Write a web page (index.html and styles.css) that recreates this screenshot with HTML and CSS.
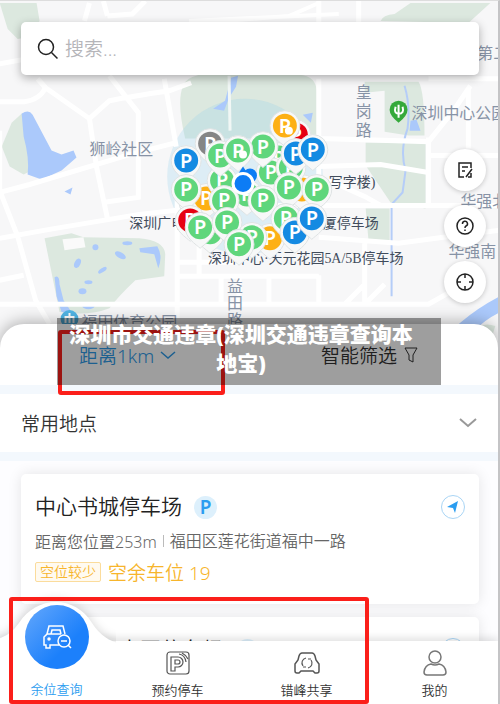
FILE: index.html
```
<!DOCTYPE html>
<html lang="zh">
<head>
    <meta charset="UTF-8">
    <meta name="viewport" content="width=device-width, initial-scale=1.0">
    <title>停车查询</title>
    <link rel="stylesheet" href="styles.css">
</head>
<body>
    <div class="app">
        <section class="map">
            <svg class="map-canvas" viewBox="0 0 500 354" preserveAspectRatio="xMidYMid slice">
                <defs>
                    <g id="pin">
                        <path d="M0 21C-4 17-15 11-15 0A15 15 0 0 1 15 0C15 11 4 17 0 21Z" fill="#f7f8f8" stroke="#dfe3e4"/>
                        <circle r="12" fill="currentColor"/>
                        <text class="pin-text" y="7">P</text>
                    </g>
                </defs>
                <rect width="500" height="354" fill="#f7f7f8"/>
                <!-- 公园 -->
                <g fill="#dce8df">
                    <path d="M0 2H37L40 20L30 36L18 38L8 28Z"/>
                    <path d="M184 85Q185 78 200 74H300Q318 75 318 92V138H186Q177 100 184 85Z"/>
                    <path d="M382 20Q384 14 396 13L412 2H492L470 22Z"/>
                    <path d="M366 81H420Q426 90 426 135H410L386 131V90L366 92Z"/>
                    <path d="M367 142H427V208L392 202L367 165Z"/>
                    <path d="M367 208H391V240L370 242Z"/>
                    <path d="M12 122L23 112L32 170L24 174L10 166L2 146Z"/>
                    <path d="M45 238L72 233L84 237L140 238Q165 240 166 254L165 276L136 280Q120 295 110 308Q90 316 60 312Z"/>
                    <path d="M470 336Q482 320 497 326L492 342Z"/>
                </g>
                <path d="M63 239L84 237L86 247L65 250Z" fill="#fafafa"/>
                <circle cx="246" cy="176" r="78" fill="#8ed0ea" fill-opacity=".25"/>
                <!-- 水域 -->
                <g fill="#abc9fb">
                    <path d="M22 113Q29 108 33 114L52 150L62 154L74 150L77 157L62 170L42 179L28 174Q30 158 24 136Z"/>
                    <path d="M214 108L226 100L232 77L239 75L237 86L230 97L225 110Z"/>
                    <path d="M304 114L314 112L312 122Z"/>
                    <path d="M432 354Q460 318 500 297V313Q474 326 460 354Z"/>
                    <path d="M412 120L418 119L422 130H411Z"/>
                    <ellipse cx="78" cy="263" rx="3" ry="5" transform="rotate(25 78 263)"/>
                    <ellipse cx="96" cy="247" rx="3" ry="3"/>
                    <ellipse cx="121" cy="255" rx="6" ry="3" transform="rotate(30 121 255)"/>
                    <ellipse cx="128" cy="243" rx="5" ry="2"/>
                    <ellipse cx="103" cy="270" rx="5" ry="2" transform="rotate(-35 103 270)"/>
                    <ellipse cx="89" cy="282" rx="4" ry="2"/>
                    <ellipse cx="83" cy="291" rx="4" ry="3"/>
                    <ellipse cx="89" cy="306" rx="6" ry="3"/>
                    <path d="M140 248L158 246Q164 256 159 268L155 254L141 252Z"/>
                    <path d="M55 277Q60 274 60 284L64 300L72 312H62L57 296Z"/>
                    <path d="M65 191L73 187L71 194Z"/>
                </g>
                <path d="M406 85Q412 105 409 128Q401 150 407 170L404 192L393 204V296" fill="none" stroke="#b5cdf8" stroke-width="2"/>
                <!-- 道路 -->
                <g fill="none" stroke="#fff" stroke-width="5">
                    <path d="M0 63L60 52M0 101H25Q40 99 46 87L38 78M46 87L90 118L110 100Q130 96 170 90L192 82M90 118L97 166L108 218M110 75L139 112V197L103 202M165 78L177 146M0 192L30 184L130 154L177 142M0 130L0 190L18 236L36 300L50 324M0 238L50 229L140 214L220 205H500M85 20L90 2M108 15L133 13L146 0M108 15L104 0"/>
                    <path d="M320 78V205M360 0V22M320 0V22M320 138L430 141L455 110L472 85M430 137V205M470 87V148M430 78H500M320 166L382 164L430 172M430 155H500M320 237L400 243L460 235L500 230M0 304H430L455 290M178 180V320M177 262H240M177 276H320M222 275V305M240 275V305M270 275V305M320 275V305M366 240V304M366 304L386 284M346 304L366 284M200 240V276M0 280L24 275M330 180L366 196L382 205"/>
                    <path d="M200 22L290 15L320 2M190 20L340 13" stroke-width="4"/>
                </g>
                <path d="M230 75L231 130" stroke="#f1f7f5" stroke-width="3"/>
                <!-- 地名 -->
                <g class="place">
                    <text x="90" y="154">狮岭社区</text>
                    <text x="479" y="58">第二</text>
                    <text x="413" y="118">深圳中心公园</text>
                    <text x="357" y="97">皇</text>
                    <text x="357" y="116">岗</text>
                    <text x="357" y="135">路</text>
                    <text x="462" y="207">华强北</text>
                    <text x="450" y="257">华强南</text>
                    <text x="228" y="292">益</text>
                    <text x="228" y="309">田</text>
                    <text x="228" y="326">路</text>
                    <text x="82" y="328">福田体育公园</text>
                </g>
                <g class="place parking">
                    <text x="130" y="228">深圳广电</text>
                    <text x="330" y="187">写字楼)</text>
                    <text x="324" y="228">厦停车场</text>
                    <text x="209" y="263">深圳中心·天元花园5A/5B停车场</text>
                </g>
                <path d="M400 122Q391 115 391 109A9 9 0 0 1 409 109Q409 115 400 122Z" fill="#35a93b"/>
                <path d="M400 104V117M397 106Q395 113 400 113M404 106Q406 113 400 113" fill="none" stroke="#fff" stroke-width="2"/>
                <circle cx="70" cy="319" r="9" fill="#50b5e5"/>
                <path d="M65 317H75M70 313V323M66 323V318M74 323V318" fill="none" stroke="#fff" stroke-width="2"/>
                <!-- 停车场标记 -->
                <use href="#pin" class="gray" x="211" y="143"/>
                <use href="#pin" class="red" x="297" y="134"/>
                <use href="#pin" class="orange" x="195" y="202"/>
                <use href="#pin" class="orange" x="207" y="198"/>
                <use href="#pin" class="orange" x="303" y="189"/>
                <use href="#pin" class="green" x="223" y="180"/>
                <use href="#pin" class="green" x="280" y="157"/>
                <use href="#pin" class="green" x="272" y="172"/>
                <use href="#pin" class="green" x="292" y="167"/>
                <use href="#pin" class="green" x="248" y="194"/>
                <use href="#pin" class="green" x="221" y="155"/>
                <use href="#pin" class="green" x="264" y="146"/>
                <use href="#pin" class="green" x="239" y="150"/>
                <use href="#pin" class="orange" x="286" y="125"/>
                <use href="#pin" class="blue" x="187" y="160"/>
                <use href="#pin" class="blue" x="297" y="153"/>
                <use href="#pin" class="blue" x="314" y="149"/>
                <use href="#pin" class="green" x="187" y="189"/>
                <use href="#pin" class="green" x="290" y="187"/>
                <use href="#pin" class="green" x="318" y="189"/>
                <use href="#pin" class="green" x="225" y="200"/>
                <use href="#pin" class="green" x="264" y="200"/>
                <use href="#pin" class="red" x="191" y="220"/>
                <use href="#pin" class="green" x="211" y="232"/>
                <use href="#pin" class="green" x="201" y="227"/>
                <use href="#pin" class="green" x="228" y="222"/>
                <use href="#pin" class="orange" x="271" y="238"/>
                <use href="#pin" class="green" x="253" y="237"/>
                <use href="#pin" class="green" x="240" y="244"/>
                <use href="#pin" class="green" x="287" y="218"/>
                <use href="#pin" class="blue" x="296" y="232"/>
                <use href="#pin" class="blue" x="313" y="218"/>
                <circle cx="290" cy="130" r="4" fill="#fff"/>
                <circle cx="244" cy="154" r="4" fill="#fff"/>
                <circle cx="251" cy="175" r="7" fill="#0c7cf5"/>
                <path d="M244 166L250 175H238Z" fill="#0c7cf5"/>
                <circle cx="244" cy="183" r="10" fill="#0c7cf5" stroke="#fff" stroke-width="3"/>
            </svg>
            <label class="search-box">
                <svg width="22" height="22" viewBox="0 0 22 22" fill="none" stroke="#222" stroke-width="1.5">
                    <circle cx="9" cy="9" r="7.5"/>
                    <path d="M14.5 14.5L20.5 20.5"/>
                </svg>
                <input type="text" placeholder="搜索..." aria-label="搜索">
            </label>
            <div class="map-tools">
                <button type="button" aria-label="反馈">
                    <svg class="tool-icon" viewBox="0 0 20 20">
                        <path d="M16 8V3H4V17H9M7 7H13M7 11H10M17 9L11 17M16 13V17H13"/>
                    </svg>
                </button>
                <button type="button" aria-label="帮助">
                    <svg class="tool-icon" viewBox="0 0 20 20">
                        <circle cx="10" cy="10" r="8"/>
                        <path d="M7.5 8A2.5 2.5 0 1 1 11 10Q10 10.5 10 12M10 13.5V15"/>
                    </svg>
                </button>
                <button type="button" aria-label="定位">
                    <svg class="tool-icon" viewBox="0 0 20 20">
                        <circle cx="10" cy="10" r="8"/>
                        <path d="M10 2V6M10 14V18M2 10H6M14 10H18"/>
                    </svg>
                </button>
            </div>
        </section>

        <section class="sheet">
            <div class="filter-bar">
                <button type="button" class="filter distance">距离1km
                    <svg width="16" height="16" viewBox="0 0 16 16" fill="none" stroke="currentColor" stroke-width="1.5"><path d="M1 5L8 11L15 5"/></svg>
                </button>
                <button type="button" class="filter">智能筛选
                    <svg width="16" height="18" viewBox="0 0 16 18" fill="none" stroke="currentColor"><path d="M2 2H14L10 9V16L6 14V9Z"/></svg>
                </button>
            </div>
            <button type="button" class="common-place">常用地点
                <svg width="18" height="12" viewBox="0 0 18 12" fill="none" stroke="#999" stroke-width="2"><path d="M1 2L9 9L17 2"/></svg>
            </button>
            <div class="park-list">
                <article class="park-card">
                    <div class="park-head">
                        <h2>中心书城停车场</h2>
                        <span class="park-mark">P</span>
                        <button type="button" class="nav-btn" aria-label="导航">
                            <svg width="12" height="12" viewBox="0 0 12 12"><path d="M11 0L8 12L6 7L0 6Z" fill="#2b9df0"/></svg>
                        </button>
                    </div>
                    <p class="park-address"><span>距离您位置253m</span><span>福田区莲花街道福中一路</span></p>
                    <p class="park-space"><span class="tag">空位较少</span>空余车位 19</p>
                </article>
                <article class="park-card">
                    <div class="park-head">
                        <h2>深圳市少中园停车场</h2>
                        <span class="park-mark">P</span>
                        <button type="button" class="nav-btn" aria-label="导航"></button>
                    </div>
                </article>
            </div>
        </section>

        <nav class="tab-bar">
            <svg class="tab-bump" width="116" height="60" viewBox="0 0 116 60">
                <path d="M-9 60V54Q10 50 19 36C37 8 75 8 92 36Q103 54 125 58V60Z" fill="#fff"/>
            </svg>
            <a href="#" class="tab active">
                <span class="tab-round">
                    <svg width="32" height="28" viewBox="0 0 32 28" fill="none" stroke="#fff" stroke-width="1.5">
                        <path d="M18 22H9V25H5V22H3V14L6 11L8 3H22L24 11M6 11H20M10 11L11 7H19L20 11"/>
                        <circle cx="23" cy="18" r="6"/>
                        <path d="M20 18H26M27 22L30 25"/>
                        <circle cx="8" cy="16" r="1" fill="#fff"/>
                    </svg>
                </span>
                余位查询
            </a>
            <a href="#" class="tab">
                <svg width="24" height="26" viewBox="0 0 24 26" fill="none" stroke="#555" stroke-width="1.2">
                    <rect x="1" y="2" width="22" height="22" rx="3"/>
                    <path d="M5 21V7H12A5 5 0 0 1 12 17H9V21ZM9 10H12A2 2 0 0 1 12 14H9ZM13 4Q19 5 20 12M16 3Q20 5 22 9"/>
                </svg>
                预约停车
            </a>
            <a href="#" class="tab">
                <svg width="26" height="26" viewBox="0 0 26 26" fill="none" stroke="#555" stroke-width="1.5">
                    <path d="M8 3H18Q20 3 21 6L22 10L25 14V21Q25 23 23 23H21L19 21H7L5 23H3Q1 23 1 21V14L4 10L5 6Q6 3 8 3Z"/>
                    <path d="M9 16A5 5 0 0 1 12 8M9 17H12M17 10A5 5 0 0 1 14 18M17 9H14" stroke-width="1.2"/>
                </svg>
                错峰共享
            </a>
            <a href="#" class="tab">
                <svg width="24" height="26" viewBox="0 0 24 26" fill="none" stroke="#777" stroke-width="1.5">
                    <circle cx="12" cy="7" r="6"/>
                    <path d="M4 25Q1 25 1 22Q2 15 8 14Q12 16 16 14Q22 15 23 22Q23 25 20 25Z"/>
                </svg>
                我的
            </a>
        </nav>

        <!-- 标注框 -->
        <div class="highlight highlight-filter"></div>
        <div class="highlight highlight-tabs"></div>
        <h1 class="caption">深圳市交通违章(深圳交通违章查询本地宝)</h1>
    </div>
</body>
</html>
```
FILE: styles.css
```
* {
    box-sizing: border-box;
}
body {
    margin: 0;
    background: #f7f7f8;
    color: #333;
    font-family: "Noto Sans", "Noto Sans CJK SC", sans-serif;
    font-weight: 350;
}
h1, h2, p {
    margin: 0;
}
button, input {
    padding: 0;
    border: none;
    background: none;
    color: inherit;
    font: inherit;
}
.app {
    position: relative;
    display: flex;
    flex-direction: column;
    height: 100vh;
    overflow: hidden;
    border-top: 1px solid #ddd;
    border-right: 2px solid #c4c4c6;
}

/* 地图 */
.map {
    position: relative;
    flex: none;
    height: 353px;
    padding: 21px 19px 0 21px;
}
.map-canvas {
    position: absolute;
    inset: 0;
    width: 100%;
    height: 100%;
}
.map-canvas text {
    font-weight: 400;
}
.place {
    fill: #8793a6;
    font-size: 16px;
}
.parking {
    fill: #414c5c;
    font-family: "Liberation Serif", "Noto Sans CJK SC", serif;
    font-size: 14px;
}
.map-canvas .pin-text {
    fill: #fff;
    font-size: 20px;
    font-weight: 600;
    text-anchor: middle;
}
.green { color: #5fd67c; }
.blue { color: #148ae2; }
.orange { color: #fdb015; }
.red { color: #e60012; }
.gray { color: #858585; }

.search-box {
    position: relative;
    display: flex;
    align-items: center;
    gap: 6px;
    height: 53px;
    padding: 0 16px;
    border-radius: 5px;
    background: #fff;
    box-shadow: 0 3px 10px rgba(0, 0, 0, 0.3);
}
.search-box input {
    flex: 1;
    min-width: 0;
    outline: none;
    font-size: 19px;
}
.search-box input::placeholder {
    color: #b5b5b9;
}
.map-tools {
    position: absolute;
    top: 148px;
    right: 12px;
    display: flex;
    flex-direction: column;
    gap: 14px;
}
.map-tools button {
    display: grid;
    place-items: center;
    width: 42px;
    height: 42px;
    border-radius: 50%;
    background: #fff;
    box-shadow: 0 1px 5px rgba(0, 0, 0, 0.2);
}
.tool-icon {
    width: 20px;
    height: 20px;
    fill: none;
    stroke: #222;
    stroke-width: 1.5;
}

/* 列表面板 */
.sheet {
    position: relative;
    display: flex;
    flex: 1;
    flex-direction: column;
    min-height: 0;
    margin-top: -30px;
    border-radius: 24px 24px 0 0;
    background: #fff;
    box-shadow: 0 -2px 16px rgba(0, 0, 0, 0.3);
}
.filter-bar {
    display: flex;
    flex: none;
    justify-content: space-between;
    height: 61px;
    padding: 0 79px;
}
.filter {
    display: flex;
    align-items: center;
    gap: 6px;
    font-size: 19px;
}
.distance {
    color: #2f9be8;
}
.common-place {
    display: flex;
    flex: none;
    align-items: center;
    justify-content: space-between;
    height: 76px;
    padding: 0 21px;
    border-top: 9px solid #f3f8fd;
    border-bottom: 9px solid #f3f8fd;
    font-size: 19px;
}
.park-list {
    display: flex;
    flex: 1;
    flex-direction: column;
    gap: 13px;
    min-height: 0;
    overflow: hidden;
    padding: 13px 19px 0 21px;
    background: #fdfdff;
}
.park-card {
    flex: none;
    height: 130px;
    padding: 16px 14px;
    border-radius: 5px;
    background: #fff;
    box-shadow: 0 0 14px rgba(0, 0, 0, 0.1);
}
.park-head {
    display: flex;
    align-items: center;
    height: 34px;
}
.park-head h2 {
    padding-bottom: 4px;
    color: #222;
    font-size: 21px;
    font-weight: 350;
}
.park-mark {
    width: 23px;
    margin-left: 12px;
    border-radius: 50%;
    background: #ddf0fc;
    color: #2b9df0;
    font-size: 19px;
    font-weight: 600;
    line-height: 23px;
    text-align: center;
}
.nav-btn {
    display: grid;
    place-items: center;
    width: 24px;
    height: 24px;
    margin-left: auto;
    border: 1px solid #a9d5f5;
    border-radius: 50%;
}
.park-address {
    display: flex;
    align-items: center;
    height: 34px;
    color: #666;
    font-size: 16px;
}
.park-address span + span {
    margin-left: 6px;
    padding-left: 6px;
    border-left: 1px solid #bbb;
    line-height: 12px;
}
.park-space {
    display: flex;
    align-items: center;
    gap: 7px;
    height: 28px;
    color: #f7b52c;
    font-size: 19px;
}
.tag {
    padding: 0 4px;
    border: 1px solid #fbdc9c;
    border-radius: 2px;
    background: #fffaf0;
    font-size: 14px;
    line-height: 18px;
}

/* 底部导航 */
.tab-bar {
    position: relative;
    display: grid;
    grid-template-columns: 113fr 129fr 129fr 127fr;
    grid-template-rows: 100%;
    flex: none;
    height: 63px;
    background: #fff;
    box-shadow: 0 -3px 8px rgba(0, 0, 0, 0.12);
}
.tab-bump {
    position: absolute;
    left: 0;
    bottom: 57px;
    overflow: hidden;
}
.tab-bump path {
    filter: drop-shadow(0 -3px 4px rgba(0, 0, 0, 0.12));
}
.tab {
    position: relative;
    display: flex;
    flex-direction: column;
    align-items: center;
    justify-content: flex-end;
    gap: 4px;
    padding-bottom: 4px;
    color: #333;
    font-size: 13px;
    line-height: 20px;
    text-decoration: none;
}
.tab.active {
    gap: 10px;
    padding-bottom: 5px;
    color: #2b9df0;
}
.tab-round {
    display: grid;
    flex: none;
    place-items: center;
    width: 64px;
    height: 64px;
    border-radius: 50%;
    background: linear-gradient(135deg, #65a8fc, #1c80fb 65%);
}

/* 标注 */
.highlight {
    position: absolute;
    border: 4px solid #fb1f1a;
    border-radius: 3px;
    pointer-events: none;
}
.highlight-filter {
    top: 329px;
    left: 58px;
    width: 167px;
    height: 65px;
}
.highlight-tabs {
    right: 129px;
    bottom: 0;
    left: 9px;
    height: 107px;
}
.caption {
    position: absolute;
    top: 317px;
    right: 57px;
    left: 57px;
    padding: 2px 27px 7px 11px;
    background: rgba(0, 0, 0, 0.38);
    color: #fff;
    font-size: 21px;
    font-weight: 900;
    line-height: 29px;
    text-align: center;
}
```
